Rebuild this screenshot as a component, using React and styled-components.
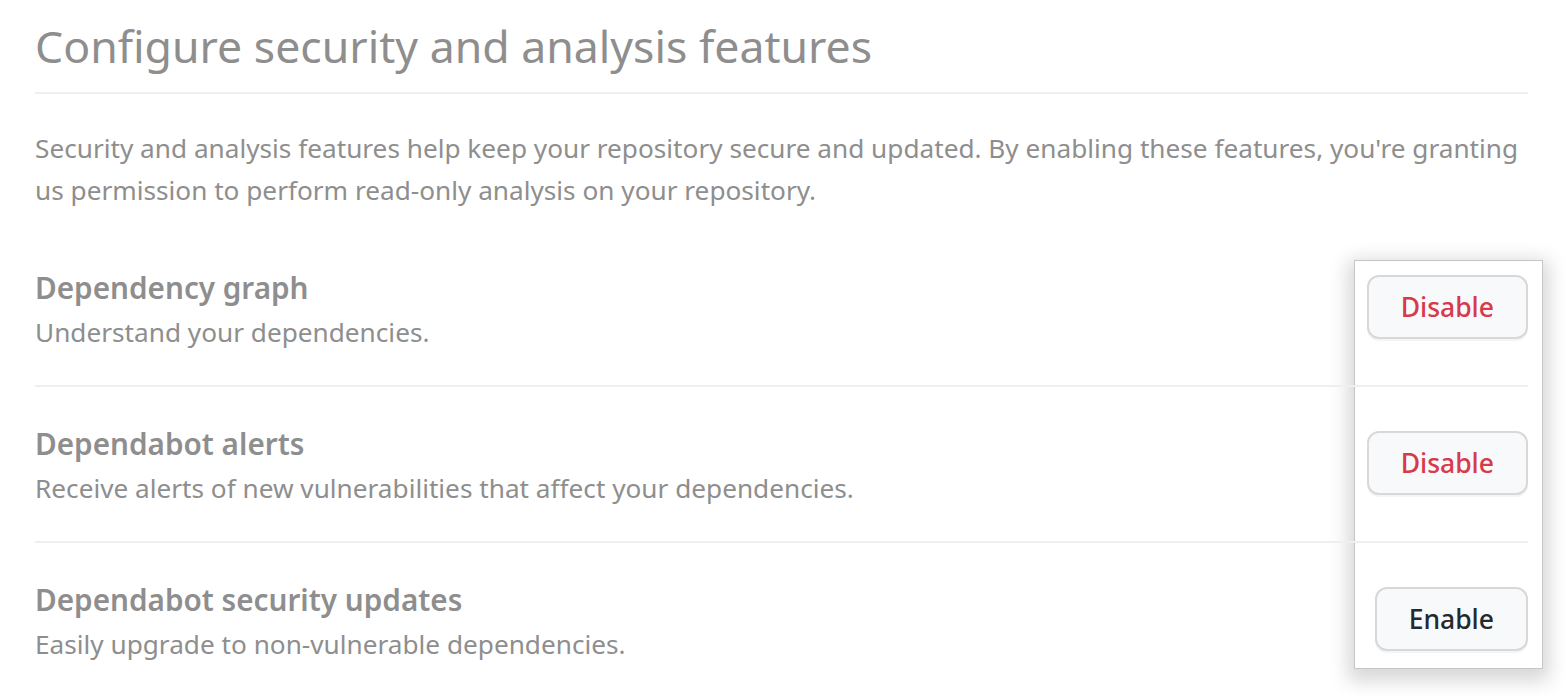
import React from 'react';
import styled, { createGlobalStyle } from 'styled-components';

const GlobalStyle = createGlobalStyle`
  body {
    margin: 0;
    background: #fff;
    font-family: "Noto Sans", "Open Sans", sans-serif;
  }
`;

const features = [
  {
    title: 'Dependency graph',
    text: 'Understand your dependencies.',
    action: 'Disable',
  },
  {
    title: 'Dependabot alerts',
    text: 'Receive alerts of new vulnerabilities that affect your dependencies.',
    action: 'Disable',
  },
  {
    title: 'Dependabot security updates',
    text: 'Easily upgrade to non-vulnerable dependencies.',
    action: 'Enable',
  },
];

const Page = styled.div`
  padding: 0 38px 0 35px;
  color: #8e8e8e;
`;

const Subhead = styled.div`
  padding: 14px 0 14px;
  border-bottom: 2px solid #efefef;
`;

const Heading = styled.h2`
  margin: 0;
  font-size: 44.6px;
  font-weight: 400;
  line-height: 64px;
  color: #8e8e8e;
`;

const Lead = styled.p`
  margin: 33px 0 0;
  font-size: 26.2px;
  line-height: 42px;
`;

const List = styled.div`
  position: relative;
  margin-top: 20px;
`;

/* the white call-out box around the buttons */
const Highlight = styled.div`
  position: absolute;
  top: 29px;
  right: -15px;
  width: 189px;
  height: 409px;
  box-sizing: border-box;
  background: #fff;
  border: 1px solid #c6c6c6;
  box-shadow: 0 6px 18px 6px rgba(0, 0, 0, 0.16);
  z-index: 0;
`;

const Row = styled.div`
  position: relative;
  z-index: 1;
  display: flex;
  align-items: center;
  justify-content: space-between;
  padding: 36px 0 32px;
  border-bottom: ${({ $last }) => ($last ? 'none' : '2px solid #efefef')};
`;

const Info = styled.div`
  display: flex;
  flex-direction: column;
`;

const Title = styled.h3`
  margin: 0;
  font-size: 29.7px;
  font-weight: 600;
  line-height: 42px;
  color: #8e8e8e;
`;

const Desc = styled.p`
  margin: 2px 0 0;
  font-size: 26.2px;
  line-height: 42px;
`;

const Button = styled.button`
  margin-bottom: 6px;
  font-family: inherit;
  font-size: 26.5px;
  font-weight: 500;
  line-height: 36px;
  padding: 12px 32px;
  border-radius: 12px;
  border: 2px solid #d8d8d8;
  background: #f7f9fb;
  box-shadow: 0 2px 0 rgba(27, 31, 35, 0.05);
  color: ${({ $danger }) => ($danger ? '#d73a49' : '#24292e')};
  cursor: pointer;
`;

export default function App() {
  return (
    <>
      <GlobalStyle />
      <Page>
        <Subhead>
          <Heading>Configure security and analysis features</Heading>
        </Subhead>
        <Lead>
          Security and analysis features help keep your repository secure and updated. By enabling
          these features, you're granting us permission to perform read-only analysis on your
          repository.
        </Lead>
        <List>
          <Highlight />
          {features.map((f, i) => (
            <Row key={f.title} $last={i === features.length - 1}>
              <Info>
                <Title>{f.title}</Title>
                <Desc>{f.text}</Desc>
              </Info>
              <Button $danger={f.action === 'Disable'}>{f.action}</Button>
            </Row>
          ))}
        </List>
      </Page>
    </>
  );
}
